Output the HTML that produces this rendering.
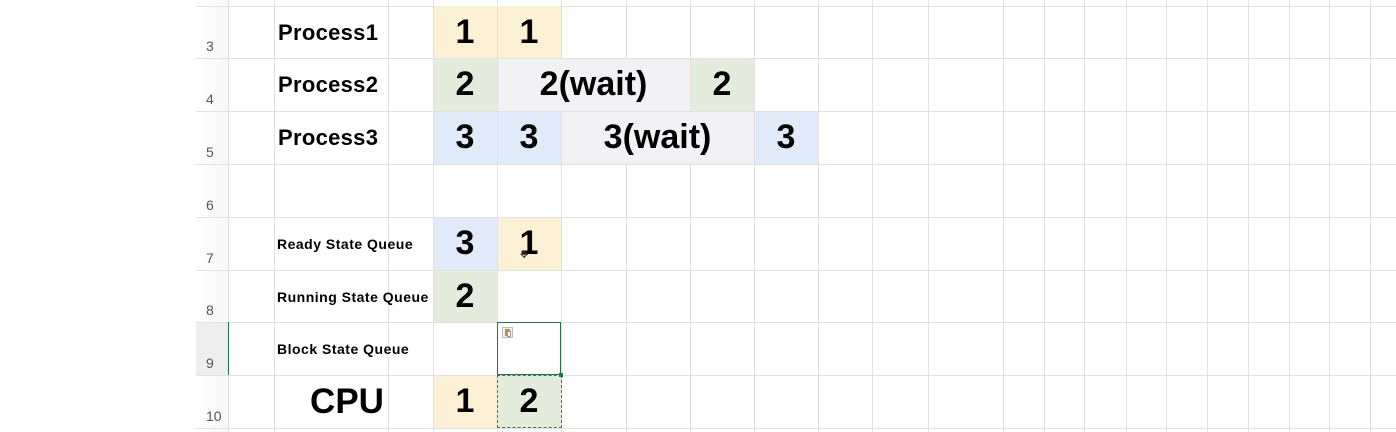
<!DOCTYPE html>
<html><head><meta charset="utf-8"><style>
body{margin:0;width:1396px;height:432px;overflow:hidden;background:#fff;position:relative;font-family:"Liberation Sans","DejaVu Sans",sans-serif;}
.a{position:absolute;}
.h{position:absolute;left:196px;width:1200px;height:1px;background:#e1e1e1;}
.v{position:absolute;top:0;height:432px;width:1px;background:#e1e1e1;}
.c{position:absolute;display:flex;align-items:center;justify-content:center;font-weight:bold;color:#000;}
.n{font-size:34px;}
.rn{position:absolute;left:196px;width:32px;font-size:14px;color:#555;text-align:left;padding-left:10px;box-sizing:border-box;}
.lbl{position:absolute;left:278px;font-weight:bold;display:flex;align-items:center;height:53px;}
.s{font-size:14px;letter-spacing:0.5px;left:277px;}
</style></head><body>
<div class="a" style="left:196px;top:0;width:32px;height:432px;background:linear-gradient(90deg,#fff,#f7f7f7);"></div>
<div class="a" style="left:196px;top:322px;width:32px;height:53px;background:#eeeeee;"></div>
<!-- fills -->
<div class="a" style="left:433px;top:6px;width:128px;height:52px;background:#fcf1d4"></div>
<div class="a" style="left:433px;top:58px;width:64px;height:53px;background:#e4eddc"></div>
<div class="a" style="left:497px;top:58px;width:193px;height:53px;background:#f2f2f4"></div>
<div class="a" style="left:690px;top:58px;width:64px;height:53px;background:#e4eddc"></div>
<div class="a" style="left:433px;top:111px;width:128px;height:53px;background:#e1eaf8"></div>
<div class="a" style="left:561px;top:111px;width:193px;height:53px;background:#f2f2f4"></div>
<div class="a" style="left:754px;top:111px;width:64px;height:53px;background:#e1eaf8"></div>
<div class="a" style="left:433px;top:217px;width:64px;height:53px;background:#e1eaf8"></div>
<div class="a" style="left:497px;top:217px;width:64px;height:53px;background:#fcf1d4"></div>
<div class="a" style="left:433px;top:270px;width:64px;height:52px;background:#e4eddc"></div>
<div class="a" style="left:433px;top:375px;width:64px;height:53px;background:#fcf1d4"></div>
<div class="a" style="left:497px;top:375px;width:64px;height:53px;background:#e4eddc"></div>
<!-- grid -->
<div class="h" style="top:6px"></div><div class="h" style="top:58px"></div><div class="h" style="top:111px"></div><div class="h" style="top:164px"></div><div class="h" style="top:217px"></div><div class="h" style="top:270px"></div><div class="h" style="top:322px"></div><div class="h" style="top:375px"></div><div class="h" style="top:428px"></div>
<div class="v" style="left:228px"></div><div class="v" style="left:274px"></div><div class="v" style="left:388px"></div><div class="v" style="left:433px"></div><div class="v" style="left:497px"></div><div class="v" style="left:561px"></div><div class="v" style="left:626px"></div><div class="v" style="left:690px"></div><div class="v" style="left:754px"></div><div class="v" style="left:818px"></div><div class="v" style="left:872px"></div><div class="v" style="left:928px"></div><div class="v" style="left:1003px"></div><div class="v" style="left:1044px"></div><div class="v" style="left:1084px"></div><div class="v" style="left:1126px"></div><div class="v" style="left:1166px"></div><div class="v" style="left:1207px"></div><div class="v" style="left:1248px"></div><div class="v" style="left:1289px"></div><div class="v" style="left:1329px"></div><div class="v" style="left:1370px"></div>
<div class="a" style="left:498px;top:59px;width:191px;height:52px;background:#f2f2f4"></div>
<div class="a" style="left:562px;top:112px;width:191px;height:52px;background:#f2f2f4"></div>
<div class="a" style="left:434px;top:6px;width:126px;height:1px;background:#fcf1d4"></div>
<!-- row numbers -->
<div class="rn" style="top:38px">3</div><div class="rn" style="top:91px">4</div><div class="rn" style="top:144px">5</div><div class="rn" style="top:197px">6</div><div class="rn" style="top:250px">7</div><div class="rn" style="top:302px">8</div><div class="rn" style="top:355px">9</div><div class="rn" style="top:408px">10</div>
<div class="a" style="left:228px;top:322px;width:1px;height:53px;background:#217346"></div>
<!-- labels -->
<div class="lbl" style="top:6px;font-size:22px;letter-spacing:0.3px">Process1</div>
<div class="lbl" style="top:58px;font-size:22px;letter-spacing:0.3px">Process2</div>
<div class="lbl" style="top:111px;font-size:22px;letter-spacing:0.3px">Process3</div>
<div class="lbl s" style="top:217px">Ready State Queue</div>
<div class="lbl s" style="top:270px">Running State Queue</div>
<div class="lbl s" style="top:322px">Block State Queue</div>
<div class="c" style="left:274px;top:375px;width:146px;height:53px;font-size:35px">CPU</div>
<!-- numbers -->
<div class="c n" style="left:433px;top:6px;width:64px;height:52px">1</div>
<div class="c n" style="left:497px;top:6px;width:64px;height:52px">1</div>
<div class="c n" style="left:433px;top:58px;width:64px;height:53px">2</div>
<div class="c n" style="left:497px;top:58px;width:193px;height:53px">2(wait)</div>
<div class="c n" style="left:690px;top:58px;width:64px;height:53px">2</div>
<div class="c n" style="left:433px;top:111px;width:64px;height:53px">3</div>
<div class="c n" style="left:497px;top:111px;width:64px;height:53px">3</div>
<div class="c n" style="left:561px;top:111px;width:193px;height:53px">3(wait)</div>
<div class="c n" style="left:754px;top:111px;width:64px;height:53px">3</div>
<div class="c n" style="left:433px;top:217px;width:64px;height:53px">3</div>
<div class="c n" style="left:497px;top:217px;width:64px;height:53px">1</div>
<div class="c n" style="left:433px;top:270px;width:64px;height:52px">2</div>
<div class="c n" style="left:433px;top:375px;width:64px;height:53px">1</div>
<div class="c n" style="left:497px;top:375px;width:64px;height:53px">2</div>
<!-- selection -->
<div class="a" style="left:497px;top:322px;width:64px;height:53px;border:1px solid #217346;box-sizing:border-box;background:#fff"></div>
<div class="a" style="left:497px;top:375px;width:65px;height:53px;border:1px dashed #3c7a50;box-sizing:border-box"></div>
<div class="a" style="left:559px;top:373px;width:4px;height:4px;background:#217346"></div>
<div class="a" style="left:502px;top:327px;width:11px;height:11px;border:1px solid #bbb;background:#f4f4f4;box-sizing:border-box"><div class="a" style="left:2px;top:1px;width:5px;height:7px;background:#c08a4a"></div><div class="a" style="left:4px;top:3px;width:4px;height:6px;background:#fff;border:1px solid #999;box-sizing:border-box"></div></div>
<div class="a" style="left:520px;top:250px;font-size:10px;color:#333">✥</div>
</body></html>
